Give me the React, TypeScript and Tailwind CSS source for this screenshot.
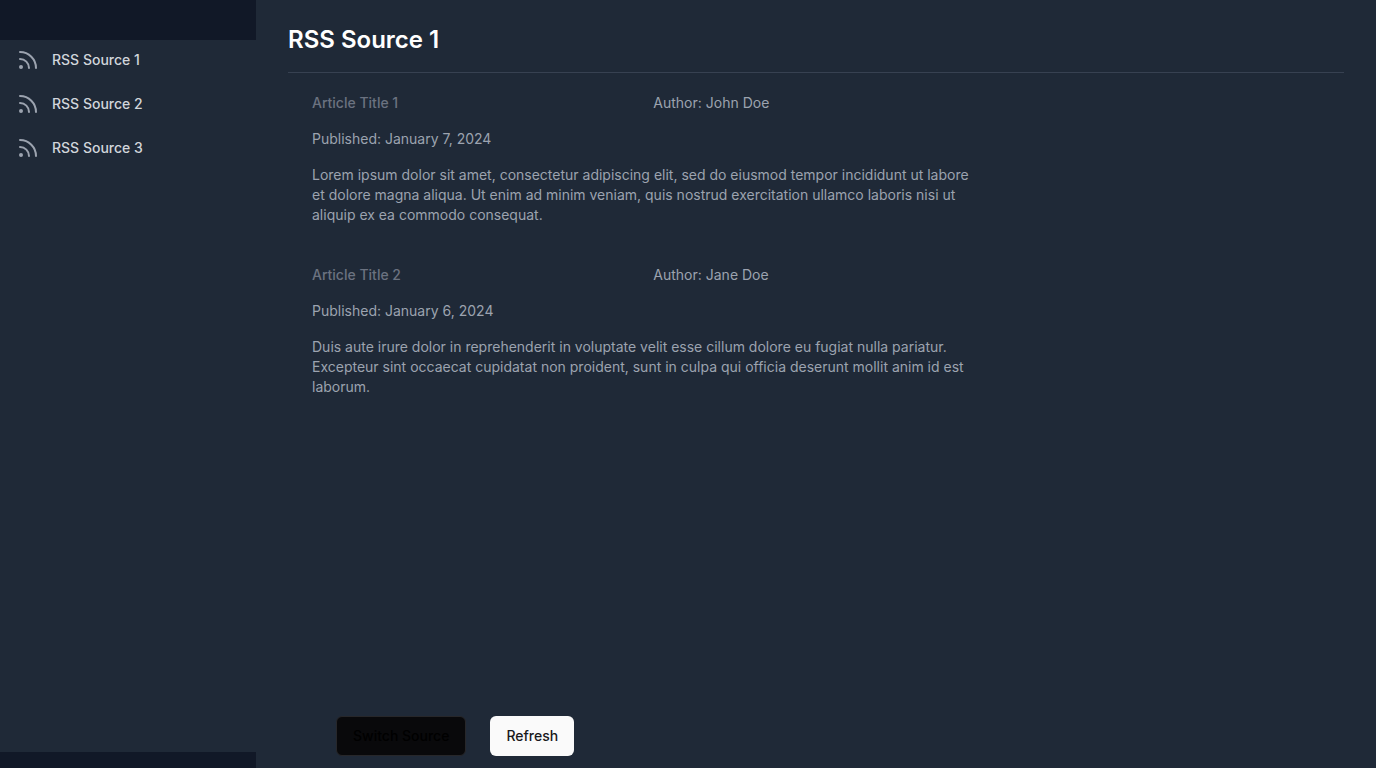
import { Rss } from "lucide-react";

const sources = ["RSS Source 1", "RSS Source 2", "RSS Source 3"];

const articles = [
  {
    title: "Article Title 1",
    author: "John Doe",
    date: "January 7, 2024",
    body: "Lorem ipsum dolor sit amet, consectetur adipiscing elit, sed do eiusmod tempor incididunt ut labore et dolore magna aliqua. Ut enim ad minim veniam, quis nostrud exercitation ullamco laboris nisi ut aliquip ex ea commodo consequat.",
  },
  {
    title: "Article Title 2",
    author: "Jane Doe",
    date: "January 6, 2024",
    body: "Duis aute irure dolor in reprehenderit in voluptate velit esse cillum dolore eu fugiat nulla pariatur. Excepteur sint occaecat cupidatat non proident, sunt in culpa qui officia deserunt mollit anim id est laborum.",
  },
];

export default function App() {
  return (
    <div className="flex h-screen bg-[#111827] font-['Inter',sans-serif] text-sm">
      <aside className="flex w-64 shrink-0 flex-col pt-10 pb-4">
        <nav className="flex-1 space-y-1 bg-[#1f2937]">
          {sources.map((name) => (
            <a
              key={name}
              href="#"
              className="flex h-10 items-center gap-3 px-4 font-medium text-[#d1d5db]"
            >
              <Rss className="size-6 text-[#9ca3af]" />
              {name}
            </a>
          ))}
        </nav>
      </aside>
      <main className="flex min-w-0 flex-1 flex-col bg-[#1f2937]">
        <header className="mx-8 border-b border-[#374151] pt-6 pb-4">
          <h1 className="text-2xl font-semibold text-white">RSS Source 1</h1>
        </header>
        <div className="flex-1 overflow-auto px-8">
          {articles.map((a) => (
            <article
              key={a.title}
              className="grid grid-cols-3 gap-4 px-6 py-5 text-[#9ca3af]"
            >
              <h2 className="font-medium text-[#6b7280]">{a.title}</h2>
              <p>Author: {a.author}</p>
              <p className="col-start-1">Published: {a.date}</p>
              <p className="col-span-2 col-start-1">{a.body}</p>
            </article>
          ))}
        </div>
        <footer className="flex gap-6 px-20 py-3">
          <button className="h-10 rounded-md border border-[#27272a] bg-[#09090b] px-4 font-medium text-black">
            Switch Source
          </button>
          <button className="h-10 rounded-md bg-[#fafafa] px-4 font-medium text-[#18181b]">
            Refresh
          </button>
        </footer>
      </main>
    </div>
  );
}
